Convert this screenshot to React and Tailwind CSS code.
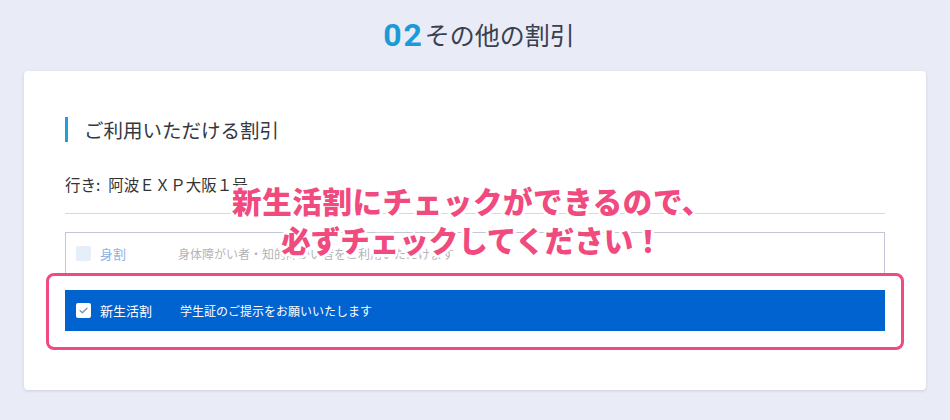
const jp = "font-['Noto_Sans_CJK_JP','Noto_Sans',sans-serif]"

function Check() {
  return (
    <span className="flex h-[15px] w-[15px] items-center justify-center rounded-[2px] bg-white">
      <svg width="9" height="7" viewBox="0 0 9 7" fill="none">
        <path d="M1 3.6 L3.4 5.8 L8 1.2" stroke="#7d8fae" strokeWidth="1.3" strokeLinecap="round" strokeLinejoin="round" />
      </svg>
    </span>
  )
}

export default function App() {
  const halo =
    '[text-shadow:2px_0_0_#fff,-2px_0_0_#fff,0_2px_0_#fff,0_-2px_0_#fff,2px_2px_0_#fff,-2px_-2px_0_#fff,2px_-2px_0_#fff,-2px_2px_0_#fff,3px_0_0_#fff,-3px_0_0_#fff,0_3px_0_#fff,0_-3px_0_#fff]'

  return (
    <div className={`h-[420px] w-[950px] bg-[#e9ebf6] ${jp}`}>
      <div className="flex h-[71px] items-center justify-center pb-[2px] pl-[8px]">
        <span className="font-['Roboto',sans-serif] text-[32px] font-bold leading-none tracking-[2px] text-[#1c9ad8]">02</span>
        <span className="ml-[1px] text-[25px] leading-none text-[#39404f]">その他の割引</span>
      </div>

      <div className="relative mx-[24px] rounded-[4px] bg-white px-[41px] pt-[46px] pb-[59px] shadow-[0_1px_3px_rgba(120,125,160,0.25)]">
        <div className="flex h-[25px] items-center">
          <span className="h-[25px] w-[3px] bg-[#1ea0d8]" />
          <span className="ml-[16px] text-[19.5px] leading-none text-[#333842]">ご利用いただける割引</span>
        </div>

        <div className="mt-[32px] flex border-b border-[#d6d7df] pb-[19px] text-[15.5px] leading-[20px] text-[#333]">
          <span className="mr-[8px]">行き:</span>
          <span>阿波ＥＸＰ大阪１号</span>
        </div>

        <div className="mt-[18px] flex h-[42px] items-center border border-b-0 border-[#c3c6da] pl-[10px] text-[13px]">
          <span className="h-[15px] w-[15px] rounded-[2px] bg-[#e6eefa]" />
          <span className="ml-[9px] w-[78px] text-[#8fb2e3]">身割</span>
          <span className="text-[12px] text-[#b3b3b8]">身体障がい者・知的障がい者をご利用いただけます</span>
        </div>

        <div className="mt-[16px] flex h-[41px] items-center bg-[#0063d0] pl-[11px] text-white">
          <Check />
          <span className="ml-[9px] w-[80px] text-[13px]">新生活割</span>
          <span className="text-[12px]">学生証のご提示をお願いいたします</span>
        </div>

        <div className="absolute left-[22px] top-[202px] h-[77px] w-[858px] rounded-[8px] border-[3px] border-[#f04a7e]" />

        <div
          className={`absolute left-0 right-[6px] top-[110px] text-center text-[29.5px] font-black leading-[39px] text-[#f04a7e] ${halo}`}
        >
          <span className="tracking-[0.6px]">新生活割にチェックができるので、</span>
          <br />
          必ずチェックしてください！
        </div>
      </div>
    </div>
  )
}
